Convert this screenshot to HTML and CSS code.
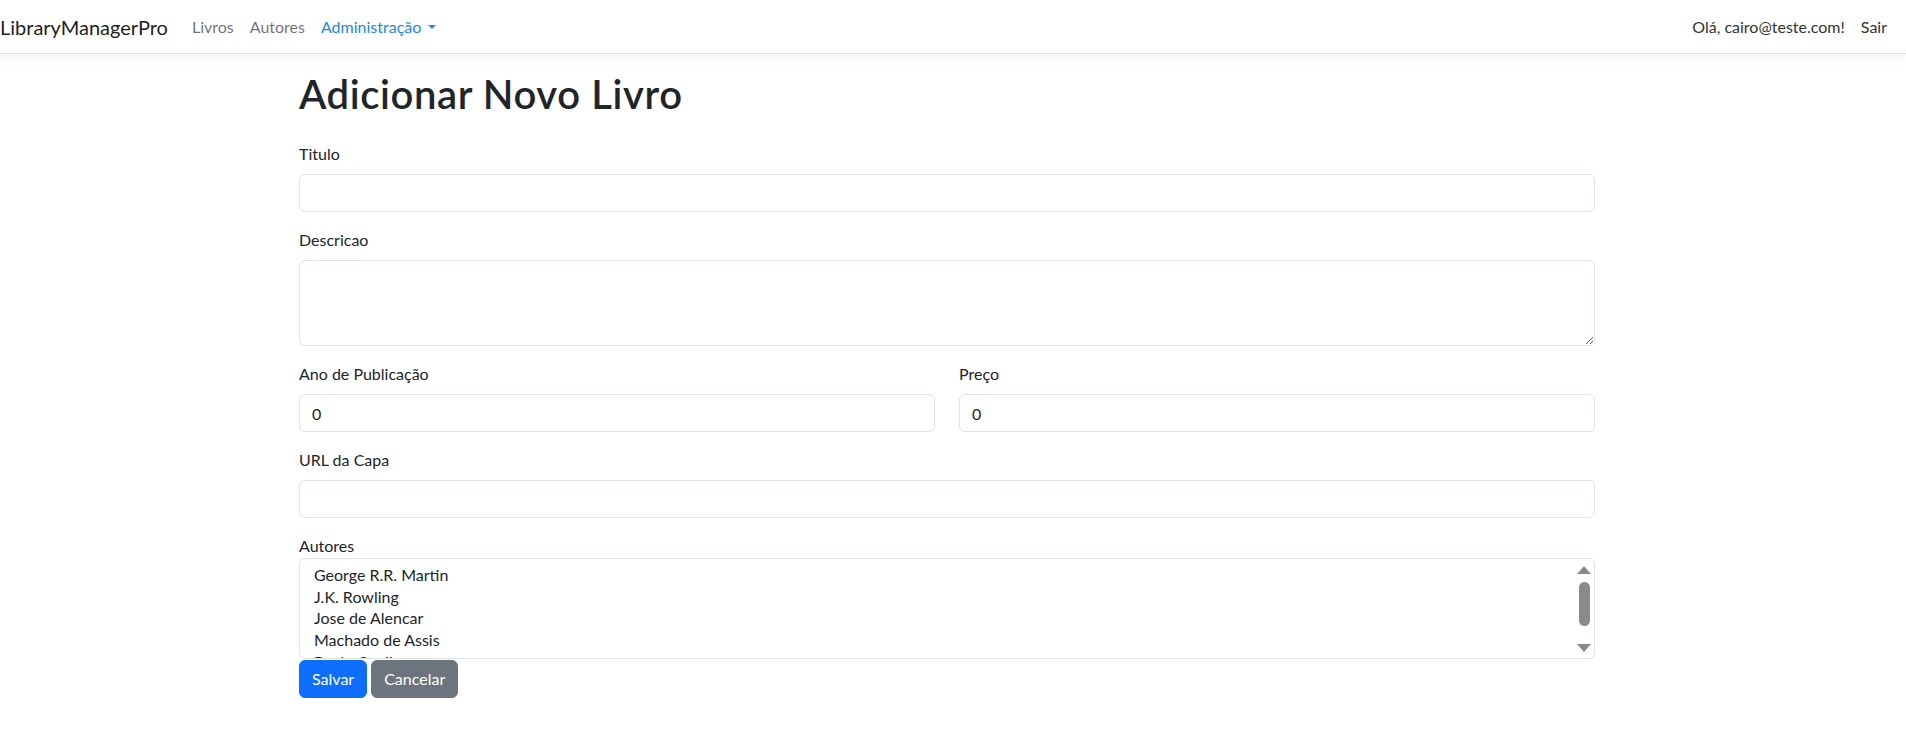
FILE: index.html
```html
<!DOCTYPE html>
<html lang="pt-BR">
<head>
<meta charset="utf-8">
<title>Adicionar Novo Livro - LibraryManagerPro</title>
<link rel="stylesheet" href="styles.css">
</head>
<body>
<header class="topbar">
  <nav class="navbar">
    <a class="brand" href="#">LibraryManagerPro</a>
    <ul class="nav-list">
      <li><a class="nav-link" href="#">Livros</a></li>
      <li><a class="nav-link" href="#">Autores</a></li>
      <li><a class="nav-link nav-link-accent dropdown-toggle" href="#">Administração</a></li>
    </ul>
    <ul class="nav-list nav-user">
      <li><a class="nav-link nav-link-dark" href="#">Olá, cairo@teste.com!</a></li>
      <li><button class="nav-link nav-link-dark nav-button" type="button">Sair</button></li>
    </ul>
  </nav>
</header>
<main class="page">
  <div class="container">
    <h1 class="title">Adicionar Novo Livro</h1>
    <form class="book-form">
      <div class="field">
        <label class="form-label" for="titulo">Titulo</label>
        <input class="form-control" id="titulo" type="text">
      </div>
      <div class="field">
        <label class="form-label" for="descricao">Descricao</label>
        <textarea class="form-control form-textarea" id="descricao"></textarea>
      </div>
      <div class="field-row">
        <div class="field">
          <label class="form-label" for="ano">Ano de Publicação</label>
          <input class="form-control" id="ano" type="number" value="0">
        </div>
        <div class="field">
          <label class="form-label" for="preco">Preço</label>
          <input class="form-control" id="preco" type="number" value="0">
        </div>
      </div>
      <div class="field">
        <label class="form-label" for="capa">URL da Capa</label>
        <input class="form-control" id="capa" type="text">
      </div>
      <div class="field field-tight">
        <label class="plain-label">Autores</label>
        <div class="listbox" role="listbox" aria-multiselectable="true">
          <div class="option" role="option">George R.R. Martin</div>
          <div class="option" role="option">J.K. Rowling</div>
          <div class="option" role="option">Jose de Alencar</div>
          <div class="option" role="option">Machado de Assis</div>
          <div class="option" role="option">Paulo Coelho</div>
          <div class="scrollbar" aria-hidden="true">
            <span class="arrow arrow-up"></span>
            <span class="thumb"></span>
            <span class="arrow arrow-down"></span>
          </div>
        </div>
      </div>
      <div class="actions">
        <button class="btn btn-primary" type="submit">Salvar</button>
        <a class="btn btn-secondary" href="#">Cancelar</a>
      </div>
    </form>
  </div>
</main>
</body>
</html>
```
FILE: styles.css
```css
* { box-sizing: border-box; }

html, body {
  margin: 0;
  padding: 0;
  background: #fff;
}

body {
  font-family: Lato, "Noto Sans", sans-serif;
  font-size: 16px;
  line-height: 1.5;
  color: #212529;
}

a { text-decoration: none; }

/* ---------- navbar ---------- */
.topbar {
  background: #fff;
  border-bottom: 1px solid #dee2e6;
  box-shadow: 0 4px 12px rgba(0, 0, 0, 0.05);
}

.navbar {
  height: 53px;
  display: flex;
  align-items: center;
  padding: 0 11px 0 0;
}

.brand {
  font-size: 20px;
  line-height: 30px;
  padding: 5px 0;
  margin-right: 16px;
  color: rgba(0, 0, 0, 0.9);
  white-space: nowrap;
}

.nav-list {
  list-style: none;
  margin: 0;
  padding: 0;
  display: flex;
  align-items: center;
}

.nav-user { margin-left: auto; }

.nav-link {
  display: block;
  padding: 8px;
  font: inherit;
  line-height: 24px;
  color: rgba(0, 0, 0, 0.58);
}

.nav-link-dark { color: #333; }

.nav-button {
  background: none;
  border: 0;
  cursor: pointer;
}

.nav-link-accent { color: #2389e3; }

.dropdown-toggle::after {
  content: "";
  display: inline-block;
  margin-left: 0.4em;
  vertical-align: 0.2em;
  border-top: 0.3em solid;
  border-right: 0.3em solid transparent;
  border-left: 0.3em solid transparent;
}

/* ---------- page ---------- */
.page {
  padding: 16px 12px 16px 0;
}

.container {
  max-width: 1296px;
  margin: 0 auto;
}

.title {
  margin: 0 0 24px;
  font-size: 40px;
  line-height: 48px;
  font-weight: 600;
  letter-spacing: 0.6px;
  color: #212529;
}

.field { margin-bottom: 16px; }
.field-tight { margin-bottom: 0; }

.field-row {
  display: grid;
  grid-template-columns: 1fr 1fr;
  column-gap: 24px;
}

.form-label {
  display: block;
  margin-bottom: 8px;
}

.plain-label { display: block; }

.form-control {
  display: block;
  width: 100%;
  height: 38px;
  padding: 6px 12px;
  font: inherit;
  line-height: 24px;
  color: #212529;
  background: #fff;
  border: 1px solid #dee2e6;
  border-radius: 6px;
  outline: none;
}

.form-textarea {
  height: 86px;
  resize: vertical;
}

.form-control::-webkit-inner-spin-button,
.form-control::-webkit-outer-spin-button {
  -webkit-appearance: none;
  margin: 0;
}

/* ---------- authors list ---------- */
.listbox {
  position: relative;
  height: 101px;
  overflow: hidden;
  padding: 6px 36px 6px 12px;
  border: 1px solid #dee2e6;
  border-radius: 6px;
  background: #fff;
}

.option {
  padding: 0 2px 1px;
  line-height: 20.7px;
  white-space: nowrap;
}

.scrollbar {
  position: absolute;
  top: 0;
  right: 2px;
  bottom: 0;
  width: 16px;
  display: flex;
  flex-direction: column;
  align-items: center;
  padding: 7px 0 6px;
  background: #fff;
}

.arrow {
  width: 0;
  height: 0;
  border-left: 7px solid transparent;
  border-right: 7px solid transparent;
}

.arrow-up { border-bottom: 8px solid #8a8a8a; }

.arrow-down {
  margin-top: auto;
  border-top: 8px solid #8a8a8a;
}

.thumb {
  margin-top: 8px;
  width: 11px;
  height: 44px;
  border-radius: 6px;
  background: #8a8a8a;
}

/* ---------- buttons ---------- */
.actions {
  display: flex;
  gap: 4px;
  margin-top: 1px;
}

.btn {
  display: inline-block;
  padding: 6px 12px;
  font: inherit;
  line-height: 24px;
  border: 1px solid transparent;
  border-radius: 6px;
  color: #fff;
  cursor: pointer;
}

.btn-primary {
  background: #0d6efd;
  border-color: #0d6efd;
}

.btn-secondary {
  background: #6c757d;
  border-color: #6c757d;
}
```
